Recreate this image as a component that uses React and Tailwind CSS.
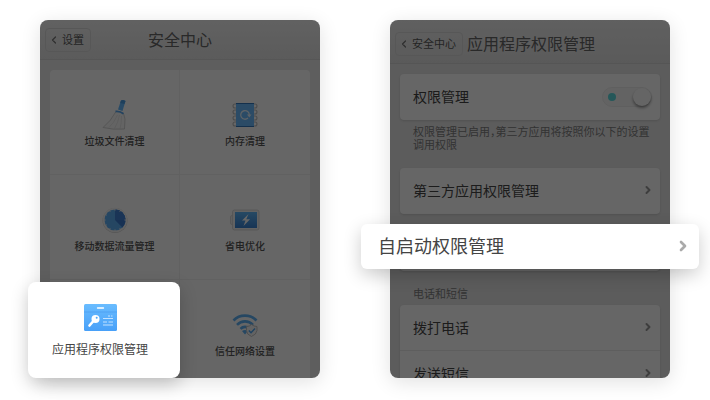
import { ChevronLeft, ChevronRight } from "lucide-react";

const BroomIcon = () => (
    <svg width="28" height="32" viewBox="0 0 28 32" fill="none">
        <path d="M20 1.5 Q22 0.5 24.5 2 L21.5 12 L17 10.5 Z" fill="#64b9ff" />
        <path d="M20 1.5 Q22 0.5 24.5 2 L23.5 5 L19.2 4 Z" fill="#4a9fe6" />
        <path d="M15 12.5 Q18 11.500 22.500 14.500 L24 20 L23.500 30 Q12 31 2 28.500 Q10 22 15 12.500 Z" fill="#fafafa" stroke="#c9c9c9" strokeWidth="0.8" />
        <path d="M14.500 12.500 Q19 12 22.500 14.800" stroke="#58a8ef" strokeWidth="1.8" />
        <path d="M16.500 16 Q13 24 8 28.500 M18.500 16 Q17 24 13.500 29.500 M20.500 17 Q20.500 25 19 29.500" stroke="#dedede" strokeWidth="0.6" />
    </svg>
);

const MemoryIcon = () => (
    <svg width="28" height="28" viewBox="0 0 28 28" fill="none">
        {[5, 11, 17, 23].map((y) => (
            <g key={y} stroke="#bdbdbd" strokeWidth="1.1">
                <path d={`M6 ${y - 2} H4 A2 2 0 0 0 4 ${y + 2} H6`} />
                <path d={`M22 ${y - 2} H24 A2 2 0 0 1 24 ${y + 2} H22`} />
            </g>
        ))}
        <rect x="5" y="2" width="18" height="24" fill="#6cbcff" />
        <path d="M5 2.500 H23 M5 25.500 H23" stroke="#3278bd" />
        <path d="M17 17 A4.300 4.300 0 1 1 18.300 14" stroke="#e8f4ff" strokeWidth="1.3" />
        <path d="M16 13.500 H20.500 L18.300 16.500 Z" fill="#e8f4ff" />
    </svg>
);

const DataIcon = () => (
    <svg width="28" height="28" viewBox="0 0 28 28" fill="none">
        <circle cx="14" cy="14.500" r="12.500" fill="#d0d0d0" />
        <circle cx="14" cy="14" r="12.300" fill="#f5f5f5" />
        <circle cx="14" cy="14" r="10.500" fill="#5eaef6" />
        <path d="M14 14 V3.500 A10.500 10.500 0 0 1 21.400 21.400 Z" fill="#3a7ad0" />
        <path d="M14 14 L14 3.500 A10.500 10.500 0 0 1 24.500 14 Z" fill="#4283d6" />
        <path d="M14 3 V4.500 M14 23.500 V25 M3 14 H4.500 M23.500 14 H25 M8.500 4.500 L9.200 5.700 M19.500 4.500 L18.800 5.700 M4.500 8.500 L5.700 9.200 M4.500 19.500 L5.700 18.800 M8.500 23.500 L9.200 22.300 M19.500 23.500 L18.800 22.300" stroke="#f5f5f5" />
    </svg>
);

const BatteryIcon = () => (
    <svg width="30" height="22" viewBox="0 0 30 22" fill="none">
        <rect x="0.500" y="6.500" width="4" height="9" rx="1.500" fill="#f0f0f0" stroke="#d2d2d2" strokeWidth="0.800" />
        <rect x="2.500" y="1" width="26.500" height="20" rx="2" fill="#f5f5f5" stroke="#d2d2d2" strokeWidth="0.800" />
        <rect x="5" y="3" width="22" height="16" fill="url(#charge)" />
        <path d="M18.500 5 L12 11.500 H15.500 L13.500 17 L20 10.300 H16.300 Z" fill="#fff" />
        <defs>
            <linearGradient id="charge" x1="0" y1="0" x2="0" y2="1">
                <stop stopColor="#5fb6f8" />
                <stop offset="1" stopColor="#3a83d4" />
            </linearGradient>
        </defs>
    </svg>
);

const WifiIcon = () => (
    <svg width="28" height="26" viewBox="0 0 28 26" fill="none">
        <g stroke="#5fb2f6" strokeWidth="2.600">
            <path d="M2.500 8.500 C8.500 2 19.500 2 25.500 8.500" />
            <path d="M6 12.800 C10.500 8.200 17.500 8.200 22 12.800" />
            <path d="M9.500 16.800 C12 14.200 16 14.200 18.500 16.800" />
        </g>
        <path d="M11 19 Q14 17 17 19 L14 22.500 Z" fill="#5fb2f6" />
        <path d="M20.500 12.500 Q23 14.500 26 14.500 V18.500 Q25.500 22.500 20.500 24.500 Q15.500 22.500 15.500 18.500 V14.500 Q18.500 14.500 20.500 12.500 Z" fill="#f8f8f8" stroke="#bcbcbc" strokeWidth="0.900" />
        <path d="M17.800 18.500 L20 20.700 L24 16.500" stroke="#4fa5ef" strokeWidth="1.500" />
    </svg>
);

const PermissionIcon = () => (
    <svg width="33" height="27" viewBox="0 0 33 27" fill="none">
        <rect width="33" height="27" rx="1.500" fill="url(#badge)" />
        <path d="M0 8 H33" stroke="#4b9ff0" strokeWidth="0.800" />
        <path d="M13.500 4 H19.500" stroke="#fff" strokeWidth="1.400" strokeLinecap="round" />
        <path d="M9 17.500 L5.500 21.500" stroke="#fff" strokeWidth="2.600" strokeLinecap="round" />
        <circle cx="11.500" cy="15" r="4" fill="#fff" />
        <circle cx="12.700" cy="13.700" r="1" fill="#50a7f8" />
        <path d="M24 12 H26 M27 12 H28.500 M19 14.500 H29 M19 18 H23 M24.500 18 H29 M19 21 H29" stroke="#c3e2ff" strokeWidth="1" />
        <defs>
            <linearGradient id="badge" x1="0" y1="0" x2="0" y2="1">
                <stop stopColor="#69bcff" />
                <stop offset="1" stopColor="#48a0f8" />
            </linearGradient>
        </defs>
    </svg>
);

const tools = [
    { name: "垃圾文件清理", Icon: BroomIcon },
    { name: "内存清理", Icon: MemoryIcon },
    { name: "移动数据流量管理", Icon: DataIcon },
    { name: "省电优化", Icon: BatteryIcon },
    null,
    { name: "信任网络设置", Icon: WifiIcon },
];

const Scrim = () => <div className="pointer-events-none absolute inset-0 bg-black/60" />;

const BackButton = ({ children }) => (
    <button className="flex h-6 shrink-0 items-center gap-0.5 justify-self-start rounded-sm border border-[#dadada] pr-1.5 pl-0.5 text-[11px] text-[#5a5a5a]">
        <ChevronLeft className="size-3 text-[#777]" strokeWidth={2.5} />
        {children}
    </button>
);

const Row = ({ children }) => (
    <button className="flex h-[46px] w-full items-center justify-between pr-1.5 pb-0.5 pl-[13px] text-sm text-[#484848]">
        {children}
        <ChevronRight className="size-3 text-[#999]" strokeWidth={4} />
    </button>
);

const SecurityCenter = () => (
    <section className="relative min-w-0 flex-1 rounded-lg shadow-[0_4px_20px_rgba(0,0,0,0.12)]">
        <div className="relative h-full overflow-hidden rounded-lg bg-[#ebebeb]">
            <header className="grid h-10 grid-cols-[1fr_auto_1fr] items-center border-b border-[#d8d8d8] bg-linear-to-b from-[#f3f3f3] to-[#e4e4e4] px-[5px]">
                <BackButton>设置</BackButton>
                <h1 className="pb-0.5 text-base text-[#666]">安全中心</h1>
            </header>
            <div className="m-2.5 grid auto-rows-[105px] grid-cols-2 overflow-hidden rounded-sm bg-white">
                {tools.map((tool, i) => (
                    <div key={i} className="border-b border-[#f3f3f3] odd:border-r">
                        {tool && (
                            <button className="flex h-full w-full flex-col items-center pt-[27px] text-[10px] leading-4 font-medium text-[#555]">
                                <span className="flex h-9 items-center">
                                    <tool.Icon />
                                </span>
                                {tool.name}
                            </button>
                        )}
                    </div>
                ))}
            </div>
            <Scrim />
        </div>
        <button className="absolute bottom-0 -left-3 flex h-24 w-[152px] flex-col items-center gap-2.5 rounded-lg bg-white pt-[22px] pr-2 text-xs text-[#444] shadow-[0_6px_18px_rgba(0,0,0,0.2)]">
            <PermissionIcon />
            应用程序权限管理
        </button>
    </section>
);

const Permissions = () => (
    <section className="relative min-w-0 flex-1 rounded-lg shadow-[0_4px_20px_rgba(0,0,0,0.12)]">
        <div className="relative h-full overflow-hidden rounded-lg bg-[#e6e6e6]">
            <header className="flex h-11 items-center gap-1 border-b border-[#d4d4d4] bg-linear-to-b from-[#efefef] to-[#e2e2e2] px-[5px] pt-1">
                <BackButton>安全中心</BackButton>
                <h1 className="pb-0.5 text-base whitespace-nowrap text-[#666]">应用程序权限管理</h1>
            </header>
            <div className="px-2.5 pt-2.5">
                <label className="flex h-[46px] items-center justify-between rounded-sm bg-white pr-2 pl-[13px] text-sm text-[#444] shadow-sm">
                    <span className="pb-0.5">权限管理</span>
                    <span className="relative flex h-5 w-[50px] items-center justify-between rounded-full border border-[#eee] bg-[#f8f8f8] pl-[5px]">
                        <input type="checkbox" defaultChecked className="absolute inset-0 m-0 appearance-none" />
                        <span className="size-2 rounded-full bg-[#5cd9de]" />
                        <span className="size-[18px] rounded-full bg-[#fcfcfc] shadow-[0_2px_3px_rgba(0,0,0,0.4)]" />
                    </span>
                </label>
                <p className="mt-[5px] pl-[13px] text-[11px] leading-[13px] text-[#808080] [font-feature-settings:'halt']">
                    {"权限管理已启用\uff0c第三方应用将按照你以下的设置"}
                    <br />
                    调用权限
                </p>
                <div className="mt-[17px] rounded-sm bg-white shadow-sm">
                    <Row>第三方应用权限管理</Row>
                </div>
                <div className="mt-2.5 h-[47px] rounded-sm bg-white shadow-sm" />
                <h2 className="mt-[15px] mb-1 pl-[13px] text-[11px] leading-[15px] text-[#808080]">电话和短信</h2>
                <div className="divide-y divide-[#ececec] rounded-sm bg-white shadow-sm">
                    <Row>拨打电话</Row>
                    <Row>发送短信</Row>
                </div>
            </div>
            <Scrim />
        </div>
        <button className="absolute -inset-x-[29px] top-[204px] flex h-[45px] items-center justify-between rounded-md bg-white pr-2 pb-[3px] pl-[17px] text-lg text-[#444] shadow-[0_6px_18px_rgba(0,0,0,0.2)]">
            自启动权限管理
            <ChevronRight className="mt-0.5 size-4 text-[#aaa]" strokeWidth={4} />
        </button>
    </section>
);

export default function App() {
    return (
        <main className="flex h-screen gap-[70px] bg-white px-10 pt-5 pb-[22px] font-['Noto_Sans_CJK_SC',sans-serif]">
            <SecurityCenter />
            <Permissions />
        </main>
    );
}
